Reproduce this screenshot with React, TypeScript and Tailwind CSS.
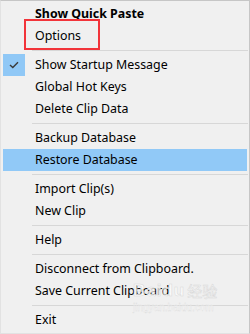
import React from "react";

type Item = { t: string; bold?: boolean; checked?: boolean; hl?: boolean } | "sep";

const items: Item[] = [
  { t: "Show Quick Paste", bold: true },
  { t: "Options" },
  "sep",
  { t: "Show Startup Message", checked: true },
  { t: "Global Hot Keys" },
  { t: "Delete Clip Data" },
  "sep",
  { t: "Backup Database" },
  { t: "Restore Database", hl: true },
  "sep",
  { t: "Import Clip(s)" },
  { t: "New Clip" },
  "sep",
  { t: "Help" },
  "sep",
  { t: "Disconnect from Clipboard." },
  { t: "Save Current Clipboard" },
  "sep",
  { t: "Exit" },
];

export default function App() {
  return (
    <div className="relative w-[250px] h-[334px] overflow-hidden bg-[#f0f0f0] border-t border-r border-t-[#c6c6c6] border-r-[#c6c6c6] border-l border-b border-l-[#e2e2e2] border-b-[#e2e2e2] pt-[2px] pl-[2px] text-[12.4px] text-[#000]" style={{ fontFamily: '"Noto Sans", sans-serif' }}>
      <div className="flex flex-col">
        {items.map((it, i) =>
          it === "sep" ? (
            <div key={i} className="h-[7px] flex items-center pl-[29px] pr-[1px]">
              <div className="h-px w-full bg-[#d7d7d7]" />
            </div>
          ) : (
            <div key={i} className={`h-[22px] flex items-center w-[244px] ${it.hl ? "bg-[#91c9f7]" : ""}`}>
              <div className="w-[22px] h-[22px] flex items-center justify-center">
                {it.checked && (
                  <div className="w-[22px] h-[22px] bg-[#90c8f6] flex items-center justify-center">
                    <svg width="10" height="8" viewBox="0 0 10 8">
                      <path d="M1 4 L3.8 6.6 L9 1.2" fill="none" stroke="#3a3a3a" strokeWidth="1.4" />
                    </svg>
                  </div>
                )}
              </div>
              <span className={`ml-[10px] leading-none ${it.bold ? "font-bold" : ""}`}>{it.t}</span>
            </div>
          )
        )}
      </div>
      <div className="absolute left-[23px] top-[18px] w-[76px] h-[31px] border-2 border-[#f2343a]" />
      <div className="absolute left-[132px] top-[281px] pointer-events-none text-white/70" style={{ fontFamily: '"Liberation Sans", "Noto Sans CJK SC", sans-serif' }}>
        <div className="flex items-end gap-[2px]">
          <span className="text-[17px] font-bold leading-none tracking-[1px]" style={{ WebkitTextStroke: "0.5px #d8d8d8" }}>Baidu</span>
          <span className="text-[15px] leading-none" style={{ WebkitTextStroke: "0.5px #d8d8d8" }}>经验</span>
        </div>
        <div className="text-[10px] leading-none mt-[4px]" style={{ WebkitTextStroke: "0.3px #dadada" }}>jingyan.baidu.com</div>
      </div>
    </div>
  );
}
